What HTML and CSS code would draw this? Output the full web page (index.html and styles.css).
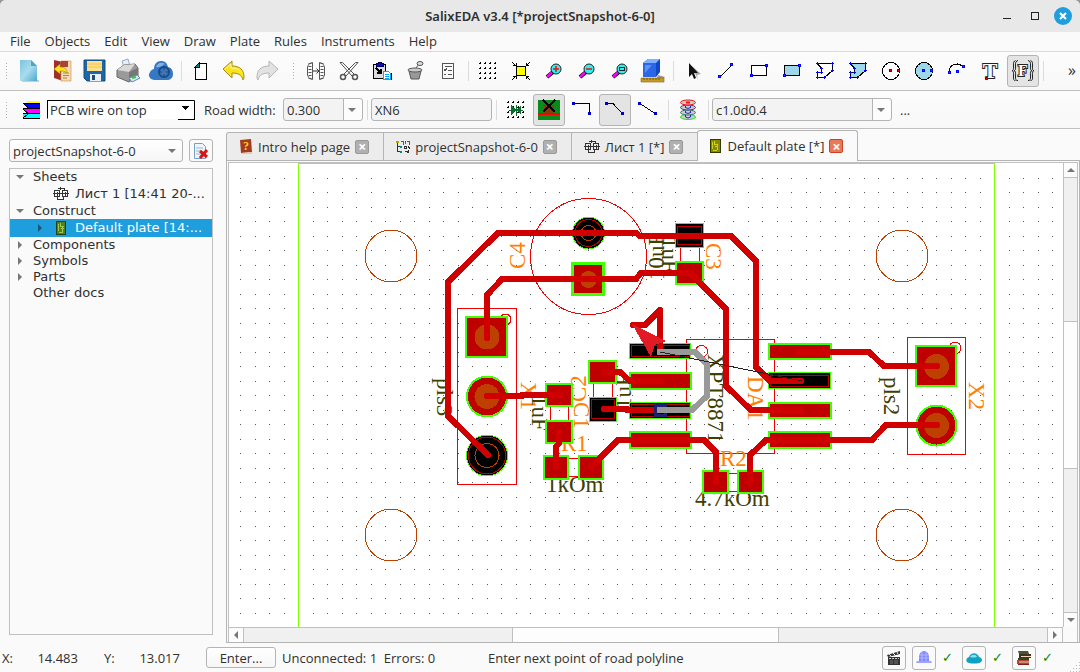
FILE: index.html
```html
<!DOCTYPE html>
<html lang="en">
<head>
    <meta charset="UTF-8">
    <meta name="viewport" content="width=device-width, initial-scale=1.0">
    <title>SalixEDA v3.4 [*projectSnapshot-6-0]</title>
    <link rel="stylesheet" href="styles.css">
</head>
<body>
    <header class="titlebar">
        <h1>SalixEDA v3.4 [*projectSnapshot-6-0]</h1>
        <div class="window-buttons">
            <button aria-label="Minimize"><svg width="18" height="18" class="px"><path d="M5 11.500h8" stroke="#222"/></svg></button>
            <button aria-label="Maximize"><svg width="18" height="18" class="px"><rect x="5.500" y="5.500" width="7" height="7" fill="none" stroke="#222"/></svg></button>
            <button aria-label="Close"><svg width="18" height="18"><circle cx="9" cy="9" r="9" fill="#1f9ede"/><path d="M6 6l6 6M12 6l-6 6" stroke="#fff" stroke-width="2"/></svg></button>
        </div>
    </header>

    <nav class="menubar">
        <button>File</button>
        <button>Objects</button>
        <button>Edit</button>
        <button>View</button>
        <button>Draw</button>
        <button>Plate</button>
        <button>Rules</button>
        <button>Instruments</button>
        <button>Help</button>
    </nav>

    <div class="toolbar">
        <span class="grip"></span>
        <button class="tool" aria-label="New"><svg viewBox="0 0 24 24"><defs><linearGradient id="sky" x2="1" y2="1"><stop offset="0" stop-color="#7cc4dd"/><stop offset=".5" stop-color="#a9dcee"/><stop offset="1" stop-color="#4ba9cf"/></linearGradient></defs><path d="M5 21h17v2H5z" fill="#ccc"/><path d="M3 1h11l6 6v15H3z" fill="url(#sky)"/><path d="M14 1v6h6z" fill="#4aa5c6"/></svg></button>
        <button class="tool" aria-label="Open"><svg viewBox="0 0 24 24"><path d="M4 1l9 2v19l-9-3z" fill="#9e2f2a"/><path d="M11 2h10v20H11z" fill="#f0dcb4" stroke="#d08a3c" stroke-width=".6"/><path d="M11 2h7v6h-7z" fill="#a8423a"/><path d="M13 14h6M13 16.500h6M13 19h4" stroke="#b9853f"/><path d="M4 10l6-5v3c5 0 7 2 7 6-2-2-4-2-7-2v3z" fill="#ffe11c" stroke="#a88300" stroke-width=".6"/></svg></button>
        <button class="tool" aria-label="Save"><svg viewBox="0 0 24 24"><path d="M1 1h21v21H4l-3-3z" fill="#1f66a8" stroke="#174c7c"/><rect x="4" y="2" width="15" height="10" fill="#ffe08a"/><path d="M4 5h15M4 8h15" stroke="#f3c44c"/><rect x="7" y="15" width="11" height="7" fill="#e8eef2"/><rect x="9" y="16" width="3" height="5" fill="#1f4d7c"/></svg></button>
        <button class="tool" aria-label="Print"><svg viewBox="0 0 24 24"><path d="M6 2l6-2 2 7-6 2z" fill="#e3efff" stroke="#9ab"/><path d="M1 11l7-5 11-1 3 4v8l-9 6L1 18z" fill="#9a9a9a" stroke="#666"/><path d="M1 11l7-5 11-1-6 8z" fill="#d8d8d8"/><path d="M13 13l9-4v8l-9 5z" fill="#777"/><path d="M13 19l8-3 3 3-8 4z" fill="#d7ecff" stroke="#68a"/><path d="M16 19l4-1" stroke="#3c3" stroke-width="2"/></svg></button>
        <button class="tool" aria-label="Cloud"><svg viewBox="0 0 24 24"><path d="M5 21a5 5 0 0 1-4-8c1-2 3-3 4-3 0-5 3-8 7-8s6 2 7 6c4 1 5 4 5 7 0 4-3 6-6 6z" fill="#3579c4"/><path d="M7 8c2-5 6-5 9-3-3 1-4 4-9 3z" fill="#7fb3e8"/><circle cx="15" cy="13" r="5" fill="none" stroke="#1e4a80" stroke-width="2"/><circle cx="15" cy="13" r="1.500" fill="#dbe9f8"/><path d="M15 8v10M10 13h10" stroke="#1e4a80"/></svg></button>
        <span class="sep"></span>
        <button class="tool" aria-label="Page"><svg viewBox="0 0 24 24" class="px"><path d="M10 4h8v17H6V8z" fill="#fff"/><path d="M9.500 4.500h8v16h-11v-12z" fill="none" stroke="#000"/><path d="M6 8l4-4v4z" fill="#088" stroke="#000"/></svg></button>
        <button class="tool" aria-label="Undo"><svg viewBox="0 0 24 24"><path d="M1 10l9-8v5c8 0 12 4 12 11 0 2-1 3-1 3-1-5-5-7-11-7v5z" fill="#fbe21b" stroke="#a98c0e"/><path d="M3 10l6-5v4c6 0 9 2 11 5" fill="none" stroke="#fff7a8"/></svg></button>
        <button class="tool" aria-label="Redo"><svg viewBox="0 0 24 24"><path d="M23 10l-9-8v5C6 7 2 11 2 18c0 2 1 3 1 3 1-5 5-7 11-7v5z" fill="#e2e2e2" stroke="#b5b5b5"/></svg></button>
        <span class="grip"></span>
        <button class="tool" aria-label="Mirror"><svg viewBox="0 0 24 24" fill="none" stroke="#555"><path d="M8.500 3.500v17l-3-1-2-3v-9l2-3z"/><path d="M6 4v16" stroke-width="3" stroke-dasharray="1 2"/><path d="M15.500 3.500v17l3-1 2-3v-9l-2-3z"/><path d="M18 4v16" stroke-width="3" stroke-dasharray="1 2"/><path d="M9 12h6M12.500 9.500L15 12l-2.500 2.500" stroke="#333"/></svg></button>
        <button class="tool" aria-label="Cut"><svg viewBox="0 0 24 24" fill="#fafafa" stroke="#555"><path d="M3 3.500h2.500L17 15l-2 2zM21 3.500h-2.500L7 15l2 2z"/><circle cx="6" cy="18" r="2.500" stroke-width="1.500"/><circle cx="18" cy="18" r="2.500" stroke-width="1.500"/></svg></button>
        <button class="tool" aria-label="Paste"><svg viewBox="0 0 24 24" class="px"><rect x="3.500" y="5.500" width="12" height="14" fill="#ddd" stroke="#000"/><path d="M6 4h2V3h3v1h2v3H6z" fill="#11a" stroke="#006"/><path d="M6 9l5 5M11 10v4H7" stroke="#000" stroke-width="2" fill="none"/><path d="M13.500 12.500h5l2 2v6h-7z" fill="#fff" stroke="#0af"/><path d="M15 15h4M15 17h4M15 19h4" stroke="#0af"/><path d="M21 14v7" stroke="#000"/></svg></button>
        <button class="tool" aria-label="Delete"><svg viewBox="0 0 24 24" fill="#999" stroke="#555"><path d="M6 12l2 8h8l2-8z"/><ellipse cx="12" cy="11" rx="7" ry="2" fill="#ccc"/><path d="M13 9l3-4" stroke-width="1"/><ellipse cx="17" cy="4.500" rx="3" ry="2" fill="#ddd"/></svg></button>
        <button class="tool" aria-label="Properties"><svg viewBox="0 0 24 24" class="px" fill="none" stroke="#555"><rect x="6.500" y="4.500" width="11" height="15"/><path d="M9 7.500h7M12 11.500h4M12 15.500h4M8 10l1 2 2-3M8 15.500h2"/></svg></button>
        <span class="sep"></span>
        <button class="tool" aria-label="Grid"><svg viewBox="0 0 24 24" class="px"><path d="M4 4h17M4 9h17M4 14h17M4 19h17" stroke="#000" stroke-width="2" stroke-dasharray="1 4"/><path d="M3 4.500h17M3 9.500h17M3 14.500h17M3 19.500h17" stroke="#000" stroke-dasharray="1 4"/></svg></button>
        <button class="tool" aria-label="Fit"><svg viewBox="0 0 24 24" class="px"><rect x="7.500" y="7.500" width="9" height="9" fill="#ff0" stroke="#000"/><path d="M3 3l4 4M21 3l-4 4M3 21l4-4M21 21l-4-4M4 6.500h3V4M20 6.500h-3V4M4 17.500h3V20M20 17.500h-3V20" fill="none" stroke="#000"/></svg></button>
        <button class="tool" aria-label="Zoom in"><svg viewBox="0 0 24 24"><path d="M5 18l6-5" stroke="#000" stroke-width="4"/><path d="M5 18l5-4.500" stroke="#f0f" stroke-width="2.500"/><circle cx="14" cy="10" r="5" fill="#3ee" stroke="#222"/><path d="M11 10h6M14 7v6" stroke="#e11" stroke-width="1.500"/></svg></button>
        <button class="tool" aria-label="Zoom out"><svg viewBox="0 0 24 24"><path d="M5 18l6-5" stroke="#000" stroke-width="4"/><path d="M5 18l5-4.500" stroke="#f0f" stroke-width="2.500"/><circle cx="14" cy="10" r="5" fill="#3ee" stroke="#222"/><path d="M11 10h6" stroke="#e11" stroke-width="1.500"/></svg></button>
        <button class="tool" aria-label="Zoom window"><svg viewBox="0 0 24 24"><path d="M5 18l6-5" stroke="#000" stroke-width="4"/><path d="M5 18l5-4.500" stroke="#f0f" stroke-width="2.500"/><circle cx="14" cy="10" r="5" fill="#3ee" stroke="#222"/><rect x="11.500" y="8.500" width="5" height="3" fill="none" stroke="#222"/></svg></button>
        <button class="tool" aria-label="3D view"><svg viewBox="0 0 24 24"><path d="M17 16l7 2-3 3h-6z" fill="#999"/><path d="M2 4l5-4h12v13l-4 5H2z" fill="#1146c8"/><path d="M2 4l5-4h12l-4 4z" fill="#7fb0ff"/><path d="M2 4h13v14H2z" fill="#2b66e6"/><path d="M4 6h7l-7 8z" fill="#5b92f5"/><path d="M0 19h23v4H0z" fill="#c79a28" stroke="#8a6510" stroke-width=".6"/><path d="M3 19v2M6 19v2M9 19v2M12 19v2M15 19v2M18 19v2" stroke="#533c08" stroke-width=".7"/></svg></button>
        <span class="sep"></span>
        <button class="tool" aria-label="Select"><svg viewBox="0 0 24 24"><path d="M11 7l9 8-4 1 1 5z" fill="#aaa"/><path d="M8 4v14l3-3 2 5 2-1-2-5h4z" fill="#111"/></svg></button>
        <button class="tool" aria-label="Line"><svg viewBox="0 0 24 24" class="px"><path d="M6 18L18 6" stroke="#000"/><path d="M4.500 16.500h2v2h-2zM16.500 4.500h2v2h-2z" class="node"/></svg></button>
        <button class="tool" aria-label="Rectangle"><svg viewBox="0 0 24 24" class="px"><rect x="4.500" y="6.500" width="15" height="10" fill="#fff" stroke="#000"/><path d="M3.500 15.500h2v2h-2zM18.500 5.500h2v2h-2z" class="node"/></svg></button>
        <button class="tool" aria-label="Filled rectangle"><svg viewBox="0 0 24 24" class="px"><rect x="4.500" y="6.500" width="15" height="10" fill="#9dd8ea" stroke="#000"/><path d="M3.500 15.500h2v2h-2zM18.500 5.500h2v2h-2z" class="node"/></svg></button>
        <button class="tool" aria-label="Polygon"><svg viewBox="0 0 24 24" class="px"><path d="M4.500 4.500h15v7l-8 7h-7v-5h4v-4z" fill="#fff" stroke="#000"/><path d="M3 4.500h3M4.500 3v3M18 4.500h3M19.500 3v3M18 11.500h3M19.500 10v3M10 18.500h3M11.500 17v3M3 18.500h3M4.500 17v3M3 13.500h3M4.500 12v3M7 9.500h3M8.500 8v3M7 13.500h3M8.500 12v3" stroke="#00f" fill="none"/></svg></button>
        <button class="tool" aria-label="Filled polygon"><svg viewBox="0 0 24 24" class="px"><path d="M4.500 4.500h15v7l-8 7h-7v-5h4v-4z" fill="#9dd8ea" stroke="#000"/><path d="M3 4.500h3M4.500 3v3M18 4.500h3M19.500 3v3M18 11.500h3M19.500 10v3M10 18.500h3M11.500 17v3M3 18.500h3M4.500 17v3M3 13.500h3M4.500 12v3M7 9.500h3M8.500 8v3M7 13.500h3M8.500 12v3" stroke="#00f" fill="none"/></svg></button>
        <button class="tool" aria-label="Circle"><svg viewBox="0 0 24 24" class="px"><circle cx="12" cy="12" r="8.500" fill="#fff" stroke="#000"/><path d="M10.500 10.500h2v2h-2zM18.500 10.500h2v2h-2z" class="node"/></svg></button>
        <button class="tool" aria-label="Filled circle"><svg viewBox="0 0 24 24" class="px"><circle cx="12" cy="12" r="8.500" fill="#9dd8ea" stroke="#000"/><path d="M10.500 10.500h2v2h-2zM18.500 10.500h2v2h-2z" class="node"/></svg></button>
        <button class="tool" aria-label="Arc"><svg viewBox="0 0 24 24" class="px"><path d="M4 14c0-10 10-11 14-6" fill="none" stroke="#000"/><path d="M3.500 12.500h2v2h-2zM17.500 6.500h2v2h-2zM11.500 11.500h2v2h-2z" class="node"/></svg></button>
        <button class="tool" aria-label="Text"><svg viewBox="0 0 24 24"><text x="12" y="19" class="letter" font-size="22">T</text><path d="M7.500 18.500h2v2h-2z" class="node"/></svg></button>
        <button class="tool pressed" aria-label="Functional text"><svg viewBox="0 0 24 24"><text x="12" y="17" class="letter" font-size="16">F</text><path d="M4.500 1.500Q2 2 2.500 7T1 11.500Q3 12 2.500 17T4.500 21.500M7 1.500Q4 2 4.500 7T3 11.500Q5 12 4.500 17T7 21.500M19.500 1.500Q22 2 21.500 7T23 11.500Q21 12 21.500 17T19.500 21.500M17 1.500Q20 2 19.500 7T21 11.500Q19 12 19.500 17T17 21.500" fill="none" stroke="#222"/></svg></button>
        <span class="sep"></span>
        <button class="more" aria-label="More tools">»</button>
    </div>

    <div class="toolbar second">
        <span class="grip"></span>
        <svg class="layers px" width="18" height="18" viewBox="0 0 18 18"><path d="M3 0h15v2H6z" fill="#ff0"/><path d="M1 2h17v5H5z" fill="#00f"/><path d="M1 7h17v5H5z" fill="#f0f"/><path d="M1 12h17v5H1z" fill="#0ff"/><path d="M1 2.500h17M1 2l5 5h12M1 7.500h5M1 8l5 4.500h12M1 12.500h5M1 17l5-4M1 17.500h17" fill="none" stroke="#000"/></svg>
        <span class="layer-select"><select aria-label="Layer"><option>PCB wire on top</option></select></span>
        <label for="roadWidth" class="road-label">Road width:</label>
        <span class="combo road"><select id="roadWidth"><option>0.300</option></select></span>
        <span class="sep"></span>
        <input type="text" class="net" value="XN6" aria-label="Net name">
        <span class="sep"></span>
        <button class="tool" aria-label="Snap to grid"><svg viewBox="0 0 24 24" class="px"><path d="M4 4h17M4 9h17M4 14h17M4 19h17" stroke="#000" stroke-width="2" stroke-dasharray="1 4"/><path d="M3 4.500h17M3 9.500h17M3 14.500h17M3 19.500h17" stroke="#000" stroke-dasharray="1 4"/><path d="M5 12h14M12 7v11" stroke="#0a6b2c"/><path d="M7 7l5 5-5 5zM17 7l-5 5 5 5z" fill="#0a6b2c"/></svg></button>
        <button class="tool pressed" aria-label="Loop removal"><svg viewBox="0 0 24 24" class="px"><path d="M1 2h22v20H1z" fill="#0a8a1a"/><path d="M7 7h10v9H7z" fill="#843c10"/><path d="M1 15h22v2H1z" fill="#f00"/><path d="M6 2l12 12M18 2L6 14" stroke="#000" stroke-width="2"/></svg></button>
        <button class="tool" aria-label="Right angle"><svg viewBox="0 0 24 24" class="px"><path d="M4 5.500h15.500V17" fill="none" stroke="#000"/><path d="M2 4h3v3H2zM18 14h3v3h-3z" class="knot"/></svg></button>
        <button class="tool pressed" aria-label="45 degrees"><svg viewBox="0 0 24 24" class="px"><path d="M4 5.500h6l10 11" fill="none" stroke="#000"/><path d="M2 4h3v3H2zM18 14h3v3h-3z" class="knot"/></svg></button>
        <button class="tool" aria-label="Any angle"><svg viewBox="0 0 24 24" class="px"><path d="M4 5.500l15 10" fill="none" stroke="#000"/><path d="M2 4h3v3H2zM18 14h3v3h-3z" class="knot"/></svg></button>
        <span class="sep"></span>
        <button class="tool" aria-label="Via"><svg viewBox="0 0 24 24" fill="#ccc"><ellipse cx="12" cy="19" rx="7.500" ry="2.500" stroke="#1e1"/><ellipse cx="12" cy="14.500" rx="7.500" ry="2.500" stroke="#376"/><ellipse cx="12" cy="9.500" rx="7.500" ry="2.500" stroke="#536"/><ellipse cx="12" cy="4.500" rx="7.500" ry="2.500" stroke="#e11"/><path d="M9.500 9.500q2.500 2 5 0M9.500 14.500q2.500 2 5 0M9.500 19q2.500 2 5 0M9.500 8v2M14.500 8v2M9.500 13v2M14.500 13v2M9.500 17v2M14.500 17v2" fill="none" stroke="#22e"/><path d="M10 4.500h4" stroke="#e11" stroke-width="2"/></svg></button>
        <span class="sep"></span>
        <span class="combo via"><select aria-label="Via type"><option>c1.0d0.4</option></select></span>
        <button class="dots" aria-label="Choose via">...</button>
    </div>

    <main class="main">
        <aside class="sidebar">
            <div class="project">
                <span class="combo plain"><select aria-label="Project"><option>projectSnapshot-6-0</option></select></span>
                <button class="close-project" aria-label="Close project"><svg width="18" height="18" viewBox="0 0 18 18"><path d="M2.500 1.500h8l3 3v12h-11z" fill="#eef4fa" stroke="#7a9fc0"/><path d="M4 6h7M4 9h5M4 12h5" stroke="#9bc"/><path d="M8 9l7 6M15 8l-7 8" stroke="#d81414" stroke-width="3"/></svg></button>
            </div>
            <ul class="tree">
                <li><span class="arrow open"></span>Sheets</li>
                <li class="leaf"><span class="arrow none"></span><svg width="16" height="14" viewBox="0 0 16 14" class="px sch"><path d="M0 6.500h16M1.500 3.500h5v6h-5zM9.500 3.500h5v6h-5zM3.500 5.500h1v3M11.500 5.500h1v3M4 10v2.500h6V10M7.500 0v3M5 1.500h6v2"/></svg><span class="name">Лист 1 [14:41 20-...</span></li>
                <li><span class="arrow open"></span>Construct</li>
                <li class="leaf selected"><span class="arrow"></span><svg width="16" height="14" viewBox="0 0 16 14" class="px"><rect x="3.500" y=".5" width="9" height="13" fill="#4f7f1e" stroke="#244014"/><path d="M5.500 3v7M7.500 2v3h3M7.500 7h3M9.500 6v5M6 11.500h4" stroke="#9cc850" fill="none"/></svg><span class="name">Default plate [14:...</span></li>
                <li><span class="arrow"></span>Components</li>
                <li><span class="arrow"></span>Symbols</li>
                <li><span class="arrow"></span>Parts</li>
                <li><span class="arrow none"></span>Other docs</li>
            </ul>
        </aside>

        <section class="editor">
            <div class="tabs">
                <div class="tab"><svg width="14" height="16" viewBox="0 0 14 16"><path d="M1 1l11-1 1 13-11 1z" fill="#a33a22"/><path d="M2 14l11-1v2H3z" fill="#e9c9a8"/><text x="7" y="11" class="help">?</text></svg><button>Intro help page</button><button class="close" aria-label="Close tab">×</button></div>
                <div class="tab"><svg width="14" height="16" viewBox="0 0 14 16" class="px" fill="none"><path d="M1.500 4v9M1 7.500h4M1 12.500h4" stroke="#333"/><path d="M0 2h3v2H0z" fill="#aa0"/><path d="M5 2.500h2v3M9.500 2v3M11 2.500h2v3" stroke="#b33"/><path d="M4 7h2v2H4zM4 12h2v2H4z" fill="#088"/><path d="M8.500 7.500h2v2h-2zM12 7l2 3M9 12h2v2M12.500 11v3" stroke="#333"/></svg><button>projectSnapshot-6-0</button><button class="close" aria-label="Close tab">×</button></div>
                <div class="tab"><svg width="16" height="14" viewBox="0 0 16 14" class="px sch"><path d="M0 6.500h16M1.500 3.500h5v6h-5zM9.500 3.500h5v6h-5zM3.500 5.500h1v3M11.500 5.500h1v3M4 10v2.500h6V10M7.500 0v3M5 1.500h6v2"/></svg><button>Лист 1 [*]</button><button class="close" aria-label="Close tab">×</button></div>
                <div class="tab active"><svg width="12" height="14" viewBox="0 0 12 14" class="px"><rect x=".5" y=".5" width="10" height="13" fill="#8a8a00" stroke="#333a00"/><path d="M2.500 3v7M4.500 2v3h3M4.500 7h3M7.500 6v5M3 11.500h4" stroke="#d0d020" fill="none"/></svg><button>Default plate [*]</button><button class="close" aria-label="Close tab">×</button></div>
            </div>
            <div class="pane">
                <div class="view">
                    <svg class="canvas px">
                        <defs>
                            <pattern id="dots" x="240" y="178" width="29" height="29" patternUnits="userSpaceOnUse">
                                <path d="M0 0h1v1H0zM15 0h1v1h-1zM0 14h1v1H0zM15 14h1v1h-1z" fill="#555"/>
                            </pattern>
                        </defs>
                        <g transform="translate(-229 -163)">
                            <rect x="229" y="170" width="2000" height="2000" fill="url(#dots)"/>
                            <rect x="298.500" y="163.500" width="696" height="600" class="edge"/>

                            <!-- mounting holes -->
                            <g class="hole-line">
                                <circle cx="391" cy="256" r="26"/>
                                <circle cx="902" cy="256" r="26"/>
                                <circle cx="391" cy="535" r="26"/>
                                <circle cx="902" cy="535" r="26"/>
                            </g>

                            <!-- part outlines -->
                            <g class="outline">
                                <circle cx="588.500" cy="256.500" r="58"/>
                                <rect x="457.500" y="308.500" width="59" height="176"/>
                                <circle cx="505.500" cy="319.500" r="5.500"/>
                                <rect x="686.500" y="339.500" width="88" height="114"/>
                                <circle cx="701.500" cy="351.500" r="6"/>
                                <rect x="907.500" y="337.500" width="58" height="117"/>
                                <circle cx="955" cy="348" r="6"/>
                                <path d="M680.500 248v13M699.500 248v13M550.500 407v13M568.500 407v13M593.500 384v13M612.500 384v13M569 458.500h9M569 476.500h9M729 473.500h8M729 491.500h8"/>
                            </g>

                            <g class="ref">
                                <text transform="translate(525 269) rotate(-90)">C4</text>
                                <text transform="translate(706 243) rotate(90)">C3</text>
                                <text transform="translate(586 402) rotate(-90)">C2</text>
                                <text transform="translate(574 402) rotate(90)">C1</text>
                                <text transform="translate(521 382) rotate(90)">X1</text>
                                <text transform="translate(969 382) rotate(90)">X2</text>
                                <text transform="translate(748 376) rotate(90)">DA1</text>
                                <text x="561" y="451">R1</text>
                                <text x="720" y="466">R2</text>
                            </g>
                            <g class="value">
                                <text transform="translate(664 280) rotate(-90)">10uF</text>
                                <text transform="translate(662 237) rotate(90)">1uF</text>
                                <text transform="translate(532 395) rotate(90)">1uF</text>
                                <text transform="translate(631 409) rotate(-90)">1uF</text>
                                <text transform="translate(437 378) rotate(90)">pls3</text>
                                <text transform="translate(884 377) rotate(90)">pls2</text>
                                <text transform="translate(708 354) rotate(90)">XPT8871</text>
                                <text x="546" y="492">1kOm</text>
                                <text x="695" y="506">4.7kOm</text>
                            </g>

                            <!-- pads -->
                            <g class="pad">
                                <rect x="572.500" y="263.500" width="31" height="31" class="thick"/>
                                <rect x="676" y="262" width="27" height="22"/>
                                <rect x="466" y="317" width="41" height="40"/>
                                <circle cx="487" cy="396.500" r="20"/>
                                <rect x="546" y="384" width="26" height="22"/>
                                <rect x="546" y="421" width="26" height="22"/>
                                <rect x="589" y="361" width="27" height="22"/>
                                <rect x="544" y="456" width="24" height="23"/>
                                <rect x="579" y="456" width="24" height="23"/>
                                <rect x="703" y="471" width="25" height="22"/>
                                <rect x="738" y="471" width="25" height="22"/>
                                <rect x="630" y="373" width="61" height="16"/>
                                <rect x="630" y="432" width="61" height="16"/>
                                <rect x="769" y="344" width="62" height="15"/>
                                <rect x="769" y="403" width="62" height="15"/>
                                <rect x="769" y="432" width="62" height="16"/>
                                <rect x="916" y="346" width="40" height="40"/>
                                <circle cx="936.500" cy="425.500" r="20"/>
                            </g>
                            <g class="drill">
                                <circle cx="588.500" cy="279.500" r="8.500"/>
                                <circle cx="487" cy="337" r="12.500"/>
                                <circle cx="487" cy="396.500" r="12.500"/>
                                <circle cx="936.500" cy="366.500" r="12.500"/>
                                <circle cx="936.500" cy="425.500" r="12.500"/>
                            </g>
                            <g class="net-pad">
                                <circle cx="588.500" cy="233" r="16"/>
                                <rect x="675.500" y="223.500" width="28" height="24"/>
                                <circle cx="487" cy="455.500" r="20.500"/>
                                <rect x="589.500" y="397.500" width="27" height="24"/>
                                <rect x="629.500" y="343.500" width="61" height="15"/>
                                <rect x="629.500" y="402.500" width="61" height="16"/>
                                <rect x="768.500" y="372.500" width="62" height="16"/>
                            </g>
                            <g class="net-line">
                                <circle cx="588.500" cy="233" r="13.500"/>
                                <rect x="677.500" y="226.500" width="24" height="18"/>
                                <circle cx="487" cy="455.500" r="18.500"/>
                                <rect x="591.500" y="399.500" width="23" height="19"/>
                                <rect x="631.500" y="345.500" width="58" height="11"/>
                                <rect x="631.500" y="404.500" width="58" height="12"/>
                                <rect x="770.500" y="375.500" width="58" height="11"/>
                            </g>
                            <g class="hole-line">
                                <circle cx="588.500" cy="233" r="7.500"/>
                                <circle cx="487" cy="455.500" r="12"/>
                            </g>

                            <!-- roads -->
                            <g class="road-line">
                                <path d="M488 455L448 416V282L498 233H636L640 236H731L756 261V367L770 381H801"/>
                                <path d="M487 338V295L502 279H636L641 273H690L726 309V386L751 410H801"/>
                                <path d="M487 396H522V395H561"/>
                                <path d="M559 432V443L556 447V467"/>
                                <path d="M591 467L618 440H704L716 452V482"/>
                                <path d="M604 372H620L630 381H661"/>
                                <path d="M604 409H627V410H660"/>
                                <path d="M750 482V455L766 440H872L886 425H937"/>
                                <path d="M799 352H869L884 366H937"/>
                                <path d="M660 350V310L645 325H633"/>
                            </g>
                            <rect x="655.500" y="405.500" width="10" height="10" class="mark"/>
                            <path d="M657 352H695L707 364V396L692 410H657" class="draft"/>
                            <path d="M660 352L802 381" class="rat"/>
                            <path d="M632 324L666 341L655 345L651 357Z" class="pointer"/>
                        </g>
                    </svg>
                    <div class="vscroll"><span class="step up"></span><span class="track"><span class="thumb"></span></span><span class="step down"></span></div>
                    <div class="hscroll"><span class="step left"></span><span class="track"><span class="thumb"></span></span><span class="step right"></span></div>
                </div>
            </div>
        </section>
    </main>

    <footer class="status">
        <span class="axis">X:</span><span class="coord">14.483</span>
        <span class="axis">Y:</span><span class="coord">13.017</span>
        <button class="enter">Enter...</button>
        <span class="counts">Unconnected: 1&nbsp; Errors: 0</span>
        <span class="hint">Enter next point of road polyline</span>
        <button class="state" aria-label="Video"><svg width="16" height="16" viewBox="0 0 16 16"><path d="M1 5l13-4v3L2 7z" fill="#333"/><path d="M3 4l2 2M7 3l2 2M11 2l1 2" stroke="#eee"/><path d="M2 7h12v8H2z" fill="#333"/><path d="M3 8.500h10" stroke="#ccc" stroke-dasharray="2 1"/><path d="M4 11h3M8 11h4M4 13h3M8 13h4" stroke="#777"/></svg></button>
        <button class="state" aria-label="Server"><svg width="16" height="16" viewBox="0 0 16 16"><path d="M3 11V7a5 6 0 0 1 10 0v4z" fill="#8088ff"/><path d="M6 2v9M10 2v9M3 5h10M3 8h10" stroke="#b4b8ff"/><path d="M1 11h14l1 2H0z" fill="#9fa5ff"/></svg></button>
        <span class="check">✓</span>
        <button class="state" aria-label="Cloud state"><svg width="16" height="16" viewBox="0 0 16 16"><path d="M3 13c-4-1-3-5 0-6 2-5 8-5 10 0 4 1 4 5 0 6q-5 1-10 0z" fill="#10a0c4"/><path d="M4 7c2-3 6-3 7 0q-4 1-7 0z" fill="#7fe4f4"/></svg></button>
        <span class="check">✓</span>
        <button class="state" aria-label="Library"><svg width="16" height="16" viewBox="0 0 16 16"><path d="M2 1h10l1 3H3z" fill="#3d5b3a"/><path d="M3 4h12v4H3z" fill="#4a2f1c"/><path d="M5 6.500h10" stroke="#f0d8b0"/><path d="M2 8h11v2H2z" fill="#2f4030"/><path d="M1 10h12v4H1z" fill="#b5442c"/><path d="M3 12h10" stroke="#e8cfa8"/><path d="M2 14h11v1H2z" fill="#722"/></svg></button>
        <span class="check">✓</span>
        <span class="sizegrip"></span>
    </footer>
</body>
</html>
```
FILE: styles.css
```css
* {
    box-sizing: border-box;
}

html {
    background: #999;
}

body {
    margin: 0;
    height: 100vh;
    display: flex;
    flex-direction: column;
    overflow: hidden;
    background: #fafafa;
    border-radius: 6px 6px 0 0;
    font-family: "Open Sans", sans-serif;
    font-size: 13px;
    line-height: 18px;
    color: #303030;
}

button, input, select {
    font: inherit;
    color: inherit;
}

button {
    background: none;
    border: none;
    padding: 0;
}

svg {
    display: block;
    flex: none;
}

.px {
    shape-rendering: crispEdges;
}

/* title and menu */
.titlebar {
    flex: none;
    height: 32px;
    display: grid;
    grid-template-columns: 1fr auto 1fr;
    align-items: center;
    background: #e8e8e8;
}

.titlebar h1 {
    grid-column: 2;
    margin: 0;
    font-family: "Noto Sans", sans-serif;
    font-size: 13px;
    font-weight: 600;
}

.window-buttons {
    display: flex;
    justify-content: flex-end;
    gap: 10px;
    padding-right: 8px;
}

.menubar {
    flex: none;
    display: flex;
    align-items: flex-start;
    gap: 14px;
    height: 20px;
    padding-left: 10px;
    border-bottom: 1px solid #dcdcdc;
}

/* toolbars */
.toolbar {
    flex: none;
    display: flex;
    align-items: center;
    gap: 1px;
    height: 39px;
    border-bottom: 1px solid #c0c0c0;
    background: linear-gradient(#fcfcfc, #f8f8f8);
}

.toolbar.second {
    height: 38px;
}

.grip {
    flex: none;
    width: 12px;
    height: 18px;
    padding: 0 3px 0 5px;
    background: radial-gradient(circle, #b0b0b0 35%, transparent 40%) 0 0 / 3px 3px;
    background-clip: content-box;
    background-origin: content-box;
}

.tool + .grip {
    margin-left: 3px;
}

.sep {
    flex: none;
    width: 6px;
    height: 20px;
    border-left: 1px solid #dcdcdc;
    margin-left: 3px;
    margin-right: -3px;
}

.tool {
    flex: none;
    width: 32px;
    height: 32px;
    display: grid;
    place-items: center;
    border: 1px solid transparent;
    border-radius: 3px;
}

.tool svg {
    width: 24px;
    height: 24px;
    overflow: visible;
}

.pressed {
    background: #e4e4e4;
    border-color: #b4b4b4;
}

.node {
    fill: #f00;
    stroke: #00f;
}

.knot {
    fill: #00c;
}

.letter {
    font-family: "Liberation Serif", serif;
    font-weight: bold;
    text-anchor: middle;
    fill: #fff;
    stroke: #222;
    stroke-width: 2;
    paint-order: stroke;
}

.more {
    margin-left: auto;
    padding: 0 4px 2px 0;
    font-size: 16px;
}

.layers {
    margin-left: 9px;
}

.layer-select {
    position: relative;
    margin-left: 6px;
}

.layer-select select {
    appearance: none;
    display: block;
    width: 148px;
    height: 19px;
    padding: 0 0 0 2px;
    background: #fff;
    border: 1px solid #000;
    border-right-color: #888;
    border-bottom-color: #fff;
    border-radius: 0;
}

.layer-select::after {
    content: "";
    position: absolute;
    right: 0;
    top: 1px;
    width: 16px;
    height: 18px;
    border-right: 1px solid #000;
    border-bottom: 1px solid #000;
    background: linear-gradient(#000, #000) no-repeat 4px 5px / 7px 1px,
        linear-gradient(#000, #000) no-repeat 5px 6px / 5px 1px,
        linear-gradient(#000, #000) no-repeat 6px 7px / 3px 1px,
        linear-gradient(#000, #000) no-repeat 7px 8px / 1px 1px;
}

.road-label {
    width: 78px;
    margin-left: 8px;
}

.combo {
    position: relative;
}

.combo select {
    appearance: none;
    display: block;
    width: 100%;
    height: 23px;
    padding: 0 3px;
    background: linear-gradient(to left, #fcfcfc 18px, #b4b4b4 18px, #b4b4b4 19px, #f3f3f3 19px);
    border: 1px solid #b4b4b4;
    border-radius: 3px;
}

.combo::after {
    content: "";
    position: absolute;
    right: 7px;
    top: 10px;
    border: 4px solid transparent;
    border-top-color: #777;
    border-bottom: none;
}

.combo.plain select {
    background: linear-gradient(#fff, #f6f6f6);
}

.road {
    width: 80px;
}

.via {
    width: 180px;
}

.net {
    width: 121px;
    height: 23px;
    padding: 0 3px;
    background: #f3f3f3;
    border: 1px solid #b4b4b4;
    border-radius: 3px;
}

.dots {
    margin-left: 7px;
}

/* main area */
.main {
    flex: 1;
    min-height: 0;
    display: flex;
}

.sidebar {
    flex: none;
    width: 226px;
    display: flex;
    flex-direction: column;
    gap: 6px;
    padding: 10px 13px 8px 9px;
}

.project {
    display: flex;
    gap: 6px;
}

.project .combo {
    flex: 1;
}

.close-project {
    width: 24px;
    height: 23px;
    display: grid;
    place-items: center;
    border: 1px solid #b4b4b4;
    border-radius: 3px;
}

.tree {
    flex: 1;
    margin: 0;
    padding: 0;
    list-style: none;
    border: 1px solid #c0c0c0;
    font-family: "DejaVu Sans", sans-serif;
    font-size: 13px;
    white-space: nowrap;
}

.tree li {
    display: flex;
    align-items: center;
    height: 16px;
    line-height: 16px;
}

.tree li.leaf {
    height: 18px;
    padding-left: 20px;
}

.leaf svg {
    margin-right: 6px;
}

.arrow {
    width: 23px;
    flex: none;
}

.arrow::before {
    content: "";
    display: block;
    width: 0;
    margin-left: 8px;
    border: 4px solid transparent;
    border-left-color: #777;
    border-right: none;
}

.arrow.open::before {
    margin-left: 6px;
    border: 4px solid transparent;
    border-top-color: #777;
    border-bottom: none;
}

.arrow.none::before {
    border-color: transparent;
}

.selected {
    background: #1f9ede;
    color: #fff;
}

.selected .arrow::before {
    border-left-color: #1a567a;
}

.sch {
    fill: none;
    stroke: #333;
}

/* editor tabs */
.editor {
    flex: 1;
    min-width: 0;
    display: flex;
    flex-direction: column;
}

.tabs {
    display: flex;
    align-items: flex-end;
    height: 31px;
}

.tab {
    display: flex;
    align-items: center;
    gap: 5px;
    height: 28px;
    padding: 0 14px 0 12px;
    background: #ececec;
    border: 1px solid #b4b4b4;
    border-bottom: none;
    margin-right: -1px;
}

.tab:first-child {
    border-top-left-radius: 3px;
}

.tab.active {
    height: 31px;
    background: #fafafa;
    border-radius: 3px 3px 0 0;
    position: relative;
    margin-bottom: -1px;
}

.close {
    width: 14px;
    height: 14px;
    background: #b0b0b0;
    border: 1px solid #999;
    border-radius: 2px;
    color: #fff;
    font-weight: bold;
    font-size: 14px;
    line-height: 11px;
}

.active .close {
    background: #e87a5a;
    border-color: #d04020;
}

.help {
    font-family: "Liberation Serif", serif;
    font-size: 12px;
    font-weight: bold;
    text-anchor: middle;
    fill: #ffd21c;
}

.pane {
    flex: 1;
    min-height: 0;
    display: flex;
    padding: 1px 1px 0;
    border: 1px solid #b4b4b4;
}

.view {
    flex: 1;
    display: grid;
    grid-template-columns: minmax(0, 1fr) 14px;
    grid-template-rows: minmax(0, 1fr) 15px;
    border: 1px solid #c0c0c0;
    border-bottom: none;
}

.canvas {
    width: 100%;
    height: 100%;
    background: #fff;
}

.vscroll, .hscroll {
    display: flex;
    background: #fcfcfc;
}

.vscroll {
    flex-direction: column;
    border-left: 1px solid #c0c0c0;
}

.hscroll {
    border-top: 1px solid #c0c0c0;
    border-right: 1px solid #c0c0c0;
}

.step {
    flex: none;
    width: 14px;
    height: 14px;
    display: grid;
    place-items: center;
}

.vscroll .step {
    width: 13px;
}

.step::before {
    content: "";
    border: 4px solid transparent;
}

.up::before {
    border-bottom-color: #777;
    border-top: none;
}

.down::before {
    border-top-color: #777;
    border-bottom: none;
}

.left::before {
    border-right-color: #777;
    border-left: none;
}

.right::before {
    border-left-color: #777;
    border-right: none;
}

.track {
    flex: 1;
    display: flex;
    align-items: center;
    justify-content: center;
    background: #f0f0f0;
    border: solid #c0c0c0;
    border-width: 0 1px;
}

.vscroll .track {
    flex-direction: column;
    border-width: 1px 0;
}

.thumb {
    width: calc(100% / 3);
    height: 100%;
    background: #fdfdfd;
    border: solid #c0c0c0;
    border-width: 0 1px;
}

.vscroll .thumb {
    width: 100%;
    height: 34%;
    border-width: 1px 0;
}

/* plate drawing */
.edge {
    fill: none;
    stroke: #80ff00;
}

.outline {
    fill: none;
    stroke: #f00000;
}

.hole-line {
    fill: none;
    stroke: #be4000;
}

.pad {
    fill: #be0000;
    stroke: #40ff00;
    stroke-width: 2;
}

.thick {
    stroke-width: 3;
}

.drill {
    fill: #be4000;
}

.net-pad {
    fill: #000;
    stroke: #40ff00;
}

.net-line {
    fill: none;
    stroke: #be0000;
}

.road-line {
    fill: none;
    stroke: #d00000;
    stroke-width: 6;
    stroke-linecap: round;
    stroke-linejoin: round;
}

.draft {
    fill: none;
    stroke: #999;
    stroke-width: 6;
}

.mark {
    fill: none;
    stroke: #202070;
    stroke-width: 3;
}

.rat {
    stroke: #222;
}

.pointer {
    fill: #e01b24;
}

.ref, .value {
    font-family: "Liberation Serif", serif;
    font-size: 23px;
    fill: #ff8000;
}

.value {
    fill: #404000;
}

/* status bar */
.status {
    flex: none;
    display: flex;
    align-items: center;
    height: 29px;
    padding-left: 2px;
}

.axis {
    width: 25px;
}

.coord {
    width: 51px;
    margin-right: 26px;
    text-align: right;
}

.enter {
    width: 70px;
    height: 21px;
    margin-right: 6px;
    border: 1px solid #b4b4b4;
    border-radius: 3px;
    background: linear-gradient(#fff, #f6f6f6);
}

.counts {
    width: 206px;
}

.hint {
    flex: 1;
}

.state {
    width: 24px;
    height: 24px;
    margin-right: 6px;
    display: grid;
    place-items: center;
    border: 1px solid #b4b4b4;
    border-radius: 3px;
}

.check {
    width: 20px;
    font-family: "DejaVu Sans", sans-serif;
    color: #080;
}

.sizegrip {
    width: 11px;
    height: 11px;
    margin-left: 7px;
    align-self: flex-end;
    background: radial-gradient(circle, #bbb 30%, transparent 40%) 0 0 / 3px 3px;
    clip-path: polygon(100% 0, 100% 100%, 0 100%);
}
```
